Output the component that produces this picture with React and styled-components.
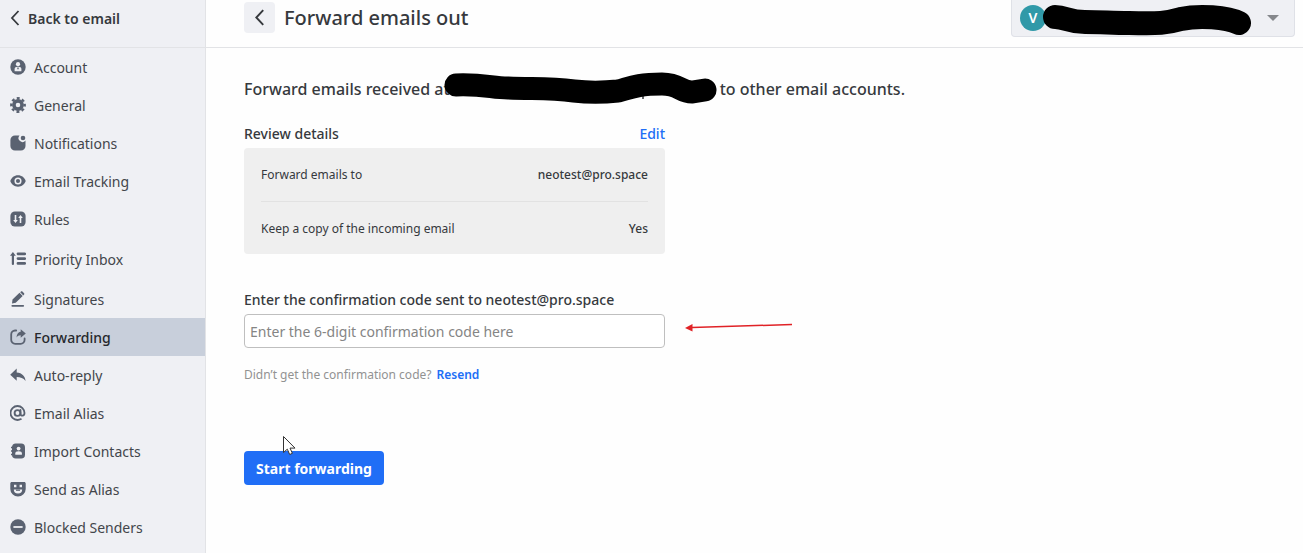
import React, { useState } from "react";
import styled, { createGlobalStyle } from "styled-components";

const color = {
  text: "#36393d",
  icon: "#5a6271",
  sidebar: "#eff0f4",
  selected: "#c8cfdb",
  line: "#e2e3e6",
  blue: "#206ef6",
};

const GlobalStyle = createGlobalStyle`
  * {
    box-sizing: border-box;
  }
  body {
    margin: 0;
    background: #fefefe;
    color: ${color.text};
    font-family: "Noto Sans", "Open Sans", sans-serif;
  }
  button, input {
    font-family: inherit;
  }
  a {
    color: inherit;
    text-decoration: none;
  }
`;

const Page = styled.div`
  display: flex;
  height: 100vh;
  overflow: hidden;
`;

const Sidebar = styled.aside`
  flex: 0 0 206px;
  background: ${color.sidebar};
  border-right: 1px solid ${color.line};
`;

const BackLink = styled.a`
  display: flex;
  align-items: center;
  gap: 8px;
  height: 48px;
  padding: 0 10px 11px;
  border-bottom: 1px solid ${color.line};
  font-size: 14px;
  font-weight: 600;
`;

const NavItem = styled.a`
  display: flex;
  align-items: center;
  gap: 8px;
  height: ${(props) => (props.$tall ? "42px" : "38px")};
  padding: 0 10px;
  background: ${(props) => (props.$active ? color.selected : "transparent")};
  color: ${(props) => (props.$active ? "#26282c" : "#43464b")};
  font-size: 14px;
  font-weight: ${(props) => (props.$active ? 500 : 400)};

  svg {
    flex: none;
    color: ${color.icon};
  }
`;

const Main = styled.main`
  flex: 1;
  min-width: 0;
`;

const Header = styled.header`
  display: flex;
  align-items: flex-start;
  justify-content: space-between;
  height: 48px;
  padding: 0 8px 0 38px;
  border-bottom: 1px solid ${color.line};
`;

const TitleGroup = styled.div`
  display: flex;
  align-items: center;
  gap: 9px;
  padding-top: 2px;
`;

const BackButton = styled.button`
  display: grid;
  place-items: center;
  width: 31px;
  height: 31px;
  padding: 0;
  border: 0;
  border-radius: 4px;
  background: ${color.sidebar};
  color: ${color.text};
`;

const Title = styled.h1`
  margin: 0;
  font-size: 20px;
  line-height: 28px;
  font-weight: 500;
`;

const AccountButton = styled.button`
  display: flex;
  align-items: center;
  width: 284px;
  height: 37px;
  padding: 0 15px 0 8px;
  border: 1px solid #dfe1e7;
  border-top: 0;
  border-radius: 0 0 4px 4px;
  background: ${color.sidebar};
`;

const Avatar = styled.span`
  flex: none;
  width: 26px;
  height: 26px;
  border-radius: 50%;
  background: #3099a8;
  color: #fff;
  font-size: 14px;
  line-height: 26px;
  font-weight: 600;
`;

const HiddenAddress = styled.svg`
  flex: none;
  margin-left: -3px;
`;

const Caret = styled.svg`
  margin-left: auto;
`;

const Content = styled.div`
  padding: 25px 38px;
`;

const Lead = styled.h2`
  display: flex;
  align-items: center;
  margin: 0;
  font-size: 16px;
  line-height: 28px;
  font-weight: 500;
  white-space: nowrap;

  svg {
    flex: none;
    margin: 0 3px 0 -6px;
    overflow: visible;
  }
`;

const Form = styled.form`
  max-width: 421px;
`;

const ReviewHead = styled.div`
  display: flex;
  justify-content: space-between;
  margin-top: 19px;
  font-size: 14px;
  line-height: 20px;
  font-weight: 500;
`;

const Heading = styled.h3`
  margin: 0;
  font-size: inherit;
  font-weight: inherit;
`;

const TextButton = styled.button`
  padding: 0;
  border: 0;
  background: none;
  color: ${color.blue};
  font-size: inherit;
  line-height: inherit;
  font-weight: ${(props) => (props.$bold ? 600 : 500)};
`;

const Review = styled.dl`
  margin: 4px 0 0;
  padding: 0 17px;
  border-radius: 4px;
  background: #efefef;
`;

const ReviewRow = styled.div`
  display: flex;
  align-items: center;
  justify-content: space-between;
  height: 53px;
  font-size: 12px;

  & + & {
    border-top: 1px solid #e2e2e2;
  }
  dd {
    margin: 0;
    font-weight: 500;
  }
`;

const Label = styled.label`
  display: block;
  margin-top: 36px;
  font-size: 14px;
  line-height: 20px;
  font-weight: 500;
`;

const Field = styled.div`
  position: relative;
  margin-top: 4px;
`;

const CodeInput = styled.input`
  display: block;
  width: 100%;
  height: 34px;
  padding: 0 5px;
  border: 1px solid #bfbfbf;
  border-radius: 4px;
  background: #fff;
  color: ${color.text};
  font-size: 14px;

  &::placeholder {
    color: #858585;
    opacity: 1;
  }
`;

const Pointer = styled.svg`
  position: absolute;
  left: calc(100% + 20px);
  top: 6px;
`;

const Hint = styled.p`
  display: flex;
  gap: 5px;
  margin: 17px 0 0;
  color: #929292;
  font-size: 12px;
  line-height: 20px;
`;

const Actions = styled.div`
  position: relative;
  margin-top: 66px;
`;

const SubmitButton = styled.button`
  height: 34px;
  padding: 0 12px;
  border: 0;
  border-radius: 4px;
  background: ${color.blue};
  color: #fff;
  font-size: 14px;
  font-weight: 700;
`;

const Cursor = styled.svg`
  position: absolute;
  left: 38px;
  top: -16px;
`;

const Chevron = ({ width = 10, height = 16 }) => (
  <svg width={width} height={height} viewBox="0 0 10 16" fill="none">
    <path d="M8.5 1 2 8l6.5 7" stroke="currentColor" strokeWidth="1.8" />
  </svg>
);

const Icon = ({ children }) => (
  <svg width="16" height="16" viewBox="0 0 16 16" fill="currentColor">
    {children}
  </svg>
);

const icons = {
  account: (
    <>
      <circle cx="8" cy="8" r="7.7" />
      <circle cx="8" cy="5.2" r="2.1" fill={color.sidebar} />
      <path
        d="M4.6 12.2V10c0-1.5 1.1-2.3 3.4-2.3s3.4.8 3.4 2.3v2.2z"
        fill={color.sidebar}
      />
      <path d="M7.3 8.6h1.4v1.6H7.3z" />
    </>
  ),
  general: (
    <>
      <circle cx="8" cy="8" r="4.1" fill="none" stroke="currentColor" strokeWidth="3.6" />
      <circle
        cx="8"
        cy="8"
        r="6.7"
        fill="none"
        stroke="currentColor"
        strokeWidth="2.4"
        strokeDasharray="2.9 2.362"
        strokeDashoffset="1.45"
      />
    </>
  ),
  notifications: (
    <>
      <path d="M5 .5h4.5a3.8 3.8 0 0 0 6 5V11a4.6 4.6 0 0 1-4.6 4.6H5A4.6 4.6 0 0 1 .4 11V5A4.6 4.6 0 0 1 5 .5z" />
      <circle cx="13" cy="3" r="2.3" />
    </>
  ),
  tracking: (
    <>
      <path d="M8 2.3c3.8 0 6.6 2.4 7.7 5.7-1.1 3.3-3.9 5.7-7.7 5.7S1.4 11.3.3 8C1.4 4.7 4.2 2.3 8 2.3z" />
      <circle cx="8" cy="8" r="2.8" fill="none" stroke={color.sidebar} strokeWidth="1.5" />
    </>
  ),
  rules: (
    <>
      <rect x=".4" y=".4" width="15.2" height="15.2" rx="4.5" />
      <path d="M5.5 4v6M10.5 6v6" stroke={color.sidebar} strokeWidth="1.6" />
      <path d="M3.2 9h4.6l-2.3 3zM8.2 7h4.6l-2.3-3z" fill={color.sidebar} />
    </>
  ),
  priority: (
    <>
      <path d="M0 4.7 2.9 1l2.9 3.7z" />
      <path d="M2.9 3.5v9.5" stroke="currentColor" strokeWidth="2.2" strokeLinecap="round" />
      <path
        d="M8 2.8h6.7M8 7.6h6.7M8 12.4h6.7"
        stroke="currentColor"
        strokeWidth="2.8"
        strokeLinecap="round"
      />
    </>
  ),
  signatures: (
    <>
      <path d="m2 12.5.5-4 7-6.7 3.2 3.2-7 6.8zM10.2 1.3l.8-.8c.4-.4 1-.4 1.4 0l1.7 1.7c.4.4.4 1 0 1.4l-.8.8z" />
      <path d="M2.3 14.8h10.9" stroke="currentColor" strokeWidth="1.8" strokeLinecap="round" />
    </>
  ),
  forwarding: (
    <>
      <path
        d="M6.2 1.5H5A4 4 0 0 0 1.2 5.5v5.3A4 4 0 0 0 5.2 14.8h5.4a4 4 0 0 0 4-4V9.5"
        fill="none"
        stroke="currentColor"
        strokeWidth="1.8"
        strokeLinecap="round"
      />
      <path d="M10.7.3 15.8 4.5l-5.1 4.2V6.2c-2 0-3.2.7-4.2 2.3.2-3.4 1.7-5.3 4.2-5.7z" />
    </>
  ),
  reply: (
    <path d="M6.7 1.6.2 7.7l6.5 6.1v-3.7c4 0 6.5 1 8.9 4-.4-4.8-3.4-8.3-8.9-8.7z" />
  ),
  alias: (
    <g fill="none" stroke="currentColor" strokeLinecap="round">
      <circle cx="7.5" cy="8" r="2.9" strokeWidth="1.9" />
      <path
        d="M10.5 5v3.8c0 2.6 4 2.6 4-.8A7 7 0 1 0 7.5 15c1.3 0 2.4-.3 3.4-.9"
        strokeWidth="1.8"
      />
    </g>
  ),
  contacts: (
    <>
      <rect x="2" y=".5" width="13" height="15" rx="3.8" />
      <path d="M1 4.5h2M1 8h2M1 11.5h2" stroke="currentColor" strokeWidth="1.5" />
      <circle cx="8.6" cy="5.6" r="1.9" fill={color.sidebar} />
      <path d="M5.3 11.8v-1.3c0-1.5 1-2.2 3.3-2.2s3.3.7 3.3 2.2v1.3z" fill={color.sidebar} />
    </>
  ),
  sendAs: (
    <>
      <path d="M1.8.9h12.4c.9 0 1.5.6 1.5 1.5V8a7.7 7.5 0 0 1-15.4 0V2.4C.3 1.5.9.9 1.8.9z" />
      <path d="M4 3.8h2.4v2.4H4zM9.6 3.8H12v2.4H9.6z" fill={color.sidebar} />
      <path d="M3.8 8.6h8.4a4.2 4 0 0 1-8.4 0z" fill={color.sidebar} />
      <path d="M6 8.6h4v1.2H6z" />
    </>
  ),
  blocked: (
    <>
      <circle cx="8" cy="8" r="7.7" />
      <path d="M3.4 8h9.2" stroke={color.sidebar} strokeWidth="1.8" />
    </>
  ),
};

const navItems = [
  { name: "Account", icon: "account" },
  { name: "General", icon: "general" },
  { name: "Notifications", icon: "notifications" },
  { name: "Email Tracking", icon: "tracking" },
  { name: "Rules", icon: "rules" },
  { name: "Priority Inbox", icon: "priority", tall: true },
  { name: "Signatures", icon: "signatures" },
  { name: "Forwarding", icon: "forwarding", active: true },
  { name: "Auto-reply", icon: "reply" },
  { name: "Email Alias", icon: "alias" },
  { name: "Import Contacts", icon: "contacts" },
  { name: "Send as Alias", icon: "sendAs" },
  { name: "Blocked Senders", icon: "blocked" },
];

const SettingsNav = () => (
  <Sidebar>
    <BackLink href="#email">
      <Chevron />
      Back to email
    </BackLink>
    <nav>
      {navItems.map((item) => (
        <NavItem
          key={item.name}
          href={`#${item.icon}`}
          $active={item.active}
          $tall={item.tall}
        >
          <Icon>{icons[item.icon]}</Icon>
          {item.name}
        </NavItem>
      ))}
    </nav>
  </Sidebar>
);

const AccountMenu = () => (
  <AccountButton type="button" aria-label="Switch account">
    <Avatar>V</Avatar>
    <HiddenAddress width="210" height="36" viewBox="0 0 210 36">
      <path
        d="M12 17C23 17 25 22 42 22c18 0 26 1 44 1 30 1 38 0 52-4 18-4 46-2 58 4"
        fill="none"
        stroke="#000"
        strokeWidth="24"
        strokeLinecap="round"
      />
    </HiddenAddress>
    <Caret width="12" height="6" viewBox="0 0 12 6">
      <path d="M0 0h12L6 6z" fill="#85878b" />
    </Caret>
  </AccountButton>
);

export default function App() {
  const [code, setCode] = useState("");

  return (
    <Page>
      <GlobalStyle />
      <SettingsNav />
      <Main>
        <Header>
          <TitleGroup>
            <BackButton type="button" aria-label="Back">
              <Chevron width={11} height={17} />
            </BackButton>
            <Title>Forward emails out</Title>
          </TitleGroup>
          <AccountMenu />
        </Header>
        <Content>
          <Lead>
            Forward emails received at
            <svg width="273" height="32" viewBox="0 0 273 32">
              <path d="M199 20v6" stroke={color.text} strokeWidth="1.5" />
              <path
                d="M12 12C40 11 48 15 64 15c30 1 42 0 66 3 18 2 34 1 44 0 12-3 18-7 44-7 18 0 18 8 30 8l13-2"
                fill="none"
                stroke="#000"
                strokeWidth="23"
                strokeLinecap="round"
              />
            </svg>
            to other email accounts.
          </Lead>
          <Form onSubmit={(e) => e.preventDefault()}>
            <ReviewHead>
              <Heading>Review details</Heading>
              <TextButton type="button">Edit</TextButton>
            </ReviewHead>
            <Review>
              <ReviewRow>
                <dt>Forward emails to</dt>
                <dd>neotest@pro.space</dd>
              </ReviewRow>
              <ReviewRow>
                <dt>Keep a copy of the incoming email</dt>
                <dd>Yes</dd>
              </ReviewRow>
            </Review>
            <Label htmlFor="code">
              Enter the confirmation code sent to neotest@pro.space
            </Label>
            <Field>
              <CodeInput
                id="code"
                placeholder="Enter the 6-digit confirmation code here"
                value={code}
                onChange={(e) => setCode(e.target.value)}
              />
              <Pointer width="108" height="14" viewBox="0 0 108 14">
                <path d="M107 4.5 7 7.5" stroke="#e02226" strokeWidth="1.5" />
                <path d="m0 8 7.5-4v7.5z" fill="#e02226" />
              </Pointer>
            </Field>
            <Hint>
              Didn’t get the confirmation code?
              <TextButton type="button" $bold>
                Resend
              </TextButton>
            </Hint>
            <Actions>
              <SubmitButton type="submit">Start forwarding</SubmitButton>
              <Cursor width="15" height="21" viewBox="0 0 15 21">
                <path
                  d="M1.5 1.5v16l3.8-3.3 2.4 5.3 2.7-1.2-2.4-5.2h5z"
                  fill="#fff"
                  stroke="#333"
                />
              </Cursor>
            </Actions>
          </Form>
        </Content>
      </Main>
    </Page>
  );
}
